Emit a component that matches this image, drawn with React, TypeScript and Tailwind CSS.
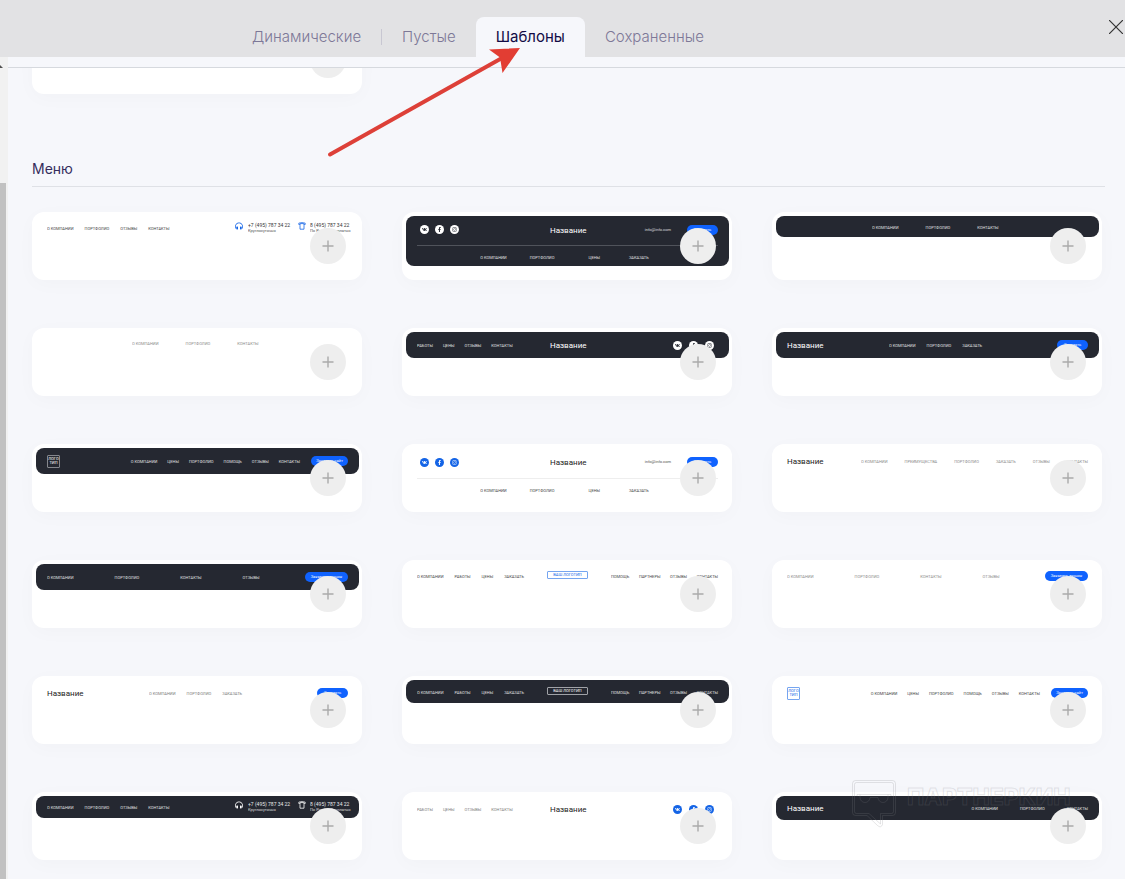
import type { ReactNode } from "react";
import clsx from "clsx";
import { FaFacebookF, FaHeadphonesAlt, FaInstagram, FaVk } from "react-icons/fa";

const tabs = ["Динамические", "Пустые", "Шаблоны", "Сохраненные"];

function PlusButton() {
  return (
    <button
      type="button"
      aria-label="Добавить"
      className="absolute right-4 bottom-4 flex size-9 items-center justify-center rounded-full bg-[#eeeeee]"
    >
      <svg width="12" height="12" viewBox="0 0 12 12" stroke="#aaaaaa" strokeWidth="1.4">
        <path d="M6 .5v11M.5 6h11" />
      </svg>
    </button>
  );
}

function Card({ children }: { children?: ReactNode }) {
  return (
    <div className="relative h-[68px] rounded-xl bg-white pt-1 pr-[3px] pl-1 shadow-[0_4px_20px_rgba(30,30,60,0.025)]">
      {children}
      <PlusButton />
    </div>
  );
}

// Site header strip inside a card
function Bar({ dark, className, children }: { dark?: boolean; className: string; children: ReactNode }) {
  return (
    <div
      className={clsx(
        "flex items-center rounded-lg px-[11px]",
        dark ? "bg-[#252831] text-white" : "text-[#222222]",
        className
      )}
    >
      {children}
    </div>
  );
}

function Nav({ items, className }: { items: string[]; className?: string }) {
  return (
    <div className={clsx("flex pt-[2px] text-[4px] leading-[6px] whitespace-nowrap uppercase opacity-85", className)}>
      {items.map((item) => (
        <span key={item}>{item}</span>
      ))}
    </div>
  );
}

function Title({ className }: { className?: string }) {
  return <span className={clsx("pt-[2px] text-[8px] leading-[10px]", className)}>Название</span>;
}

function Pill({ children, className }: { children: string; className: string }) {
  return (
    <span
      className={clsx(
        "h-[10px] shrink-0 rounded-full bg-[#0f62fe] text-center text-[4px] leading-[10px] whitespace-nowrap text-white",
        className
      )}
    >
      {children}
    </span>
  );
}

function Socials({ dark, className }: { dark?: boolean; className?: string }) {
  return (
    <div className={clsx("flex", className)}>
      {[FaVk, FaFacebookF, FaInstagram].map((Icon, i) => (
        <span
          key={i}
          className={clsx(
            "flex size-[9px] items-center justify-center rounded-full",
            dark ? "bg-white text-[#252831]" : "bg-[#1464e6] text-white"
          )}
        >
          <Icon size={5} />
        </span>
      ))}
    </div>
  );
}

function Phones({ dark }: { dark?: boolean }) {
  const color = dark ? "text-white" : "text-[#1464e6]";
  return (
    <div className="ml-auto flex text-[5px] leading-[6px] whitespace-nowrap">
      <FaHeadphonesAlt size={8} className={clsx("mr-[5px]", color)} />
      <div className="w-[41px]">
        <div className="opacity-90">+7 (495) 787 34 22</div>
        <div className="text-[4px] opacity-80">Круглосуточно</div>
      </div>
      <svg width="8" height="8" viewBox="0 0 8 8" fill="none" stroke="currentColor" strokeWidth=".8" className={clsx("mr-1 ml-[9px]", color)}>
        <path d="M.8 2.5V1.2C2.8.5 5.2.5 7.2 1.2v1.3L5.8 2.7V1.6H2.2v1.1zM2 3.2v4h4v-4" />
      </svg>
      <div className="w-[38px]">
        <div className="opacity-90">8 (495) 787 34 22</div>
        <div className="text-[4px] opacity-80">По России бесплатно</div>
      </div>
    </div>
  );
}

function SquareLogo({ className }: { className: string }) {
  return (
    <span className={clsx("flex size-[13px] flex-col items-center justify-center rounded-[1px] border text-[4px] leading-[4px]", className)}>
      <span>ЛОГО</span>
      <span>ТИП</span>
    </span>
  );
}

function PhoneMenu({ dark }: { dark?: boolean }) {
  return (
    <Card>
      <Bar dark={dark} className={dark ? "h-[22px]" : "h-6"}>
        <Nav items={["О компании", "Портфолио", "Отзывы", "Контакты"]} className="gap-[11px]" />
        <Phones dark={dark} />
      </Bar>
    </Card>
  );
}

function TwoRowMenu({ dark }: { dark?: boolean }) {
  return (
    <Card>
      <div
        className={clsx(
          "rounded-lg px-[11px]",
          dark ? "h-[50px] bg-[#252831] text-white" : "h-[52px] text-[#222222]"
        )}
      >
        <div className={clsx("flex items-center border-b pb-[2px]", dark ? "h-[30px] border-[#50535b]" : "h-[31px] border-[#eeeeee]")}>
          <Socials dark={dark} className="ml-[3px] gap-[6px]" />
          <Title className="ml-[91px]" />
          <div className="ml-auto flex items-center gap-4">
            <span className="text-[4px] leading-[6px] opacity-80">info@info.com</span>
            <Pill className="w-[31px]">Заказать</Pill>
          </div>
        </div>
        <div className="flex h-[22px] items-center justify-center pr-[6px]">
          <Nav items={["О компании", "Портфолио"]} className="gap-[23px]" />
          <Nav items={["Цены", "Заказать"]} className="ml-[34px] gap-[29px]" />
        </div>
      </div>
    </Card>
  );
}

function CenteredMenu({ dark }: { dark?: boolean }) {
  return (
    <Card>
      <Bar dark={dark} className={dark ? "h-[21px]" : "h-[22px]"}>
        <Nav
          items={["О компании", "Портфолио", "Контакты"]}
          className={clsx("ml-[85px] gap-[27px]", !dark && "text-[#777777]")}
        />
      </Bar>
    </Card>
  );
}

function SocialMenu({ dark }: { dark?: boolean }) {
  return (
    <Card>
      <Bar dark={dark} className="h-[26px]">
        <div className="w-[133px]">
          <Nav
            items={["Работы", "Цены", "Отзывы", "Контакты"]}
            className={clsx("gap-[10px]", !dark && "text-[#666666]")}
          />
        </div>
        <Title />
        <Socials dark={dark} className="mr-1 ml-auto gap-[7px]" />
      </Bar>
    </Card>
  );
}

function OrderMenu({ dark }: { dark?: boolean }) {
  return (
    <Card>
      <Bar dark={dark} className="h-[26px]">
        <Title className="w-[102px]" />
        <Nav
          items={["О компании", "Портфолио", "Заказать"]}
          className={clsx("gap-[11px]", !dark && "text-[#666666]")}
        />
        <Pill className="ml-auto w-[31px]">Заказать</Pill>
      </Bar>
    </Card>
  );
}

function LogoMenu({ dark }: { dark?: boolean }) {
  return (
    <Card>
      <Bar dark={dark} className="h-[26px]">
        <SquareLogo className={dark ? "border-[#85878d]" : "border-[#75a5f0] text-[#1464e6]"} />
        <Nav
          items={["О компании", "Цены", "Портфолио", "Помощь", "Отзывы", "Контакты"]}
          className="ml-auto gap-[10px]"
        />
        <Pill className="ml-[11px] w-[37px]">Заказать сайт</Pill>
      </Bar>
    </Card>
  );
}

function CallMenu({ dark }: { dark?: boolean }) {
  return (
    <Card>
      <Bar dark={dark} className={dark ? "h-[26px]" : "h-6"}>
        <Nav
          items={["О компании", "Портфолио", "Контакты", "Отзывы"]}
          className={clsx("gap-[41px]", !dark && "text-[#777777]")}
        />
        <Pill className="ml-auto w-[43px]">Заказать звонок</Pill>
      </Bar>
    </Card>
  );
}

function SplitMenu({ dark }: { dark?: boolean }) {
  return (
    <Card>
      <Bar dark={dark} className={clsx("justify-between", dark ? "h-[23px]" : "h-6")}>
        <Nav items={["О компании", "Работы", "Цены", "Заказать"]} className="w-[107px] justify-between" />
        <span
          className={clsx(
            "mb-[2px] h-2 w-[41px] rounded-[1px] border text-center text-[4px] leading-[6px] whitespace-nowrap",
            dark ? "border-[#a0a2a7]" : "border-[#75a5f0] text-[#1464e6]"
          )}
        >
          ВАШ ЛОГОТИП
        </span>
        <Nav items={["Помощь", "Партнеры", "Отзывы", "Контакты"]} className="w-[107px] justify-between" />
      </Bar>
    </Card>
  );
}

function Watermark() {
  return (
    <div className="pointer-events-none absolute -top-3 left-20 flex items-start gap-[11px]">
      <svg width="44" height="48" viewBox="0 0 44 48" fill="none" stroke="#808085" strokeOpacity=".2">
        <path d="M3.500.500h37a3 3 0 0 1 3 3v29a3 3 0 0 1-3 3H30.500V44.500q-1.500 4-5 1L15 35.500H3.500a3 3 0 0 1-3-3v-29a3 3 0 0 1 3-3z" />
        <path d="M4.500 2.500h35a2 2 0 0 1 2 2v27a2 2 0 0 1-2 2H28.500V44L17 33.500H4.500a2 2 0 0 1-2-2v-27a2 2 0 0 1 2-2z" />
        <path d="M5 16V14.500h34V16M8 14.500v3a5 5 0 0 0 10 0M26 17.500a5 5 0 0 0 10 0v-3M18 17.500h8" />
      </svg>
      <span className="mt-[5px] font-['Inter','Noto_Sans',sans-serif] text-[23px] leading-6 font-extrabold text-transparent [-webkit-text-stroke:1px_rgba(128,128,133,0.2)]">
        ПАРТНЕРКИН
      </span>
    </div>
  );
}

export default function App() {
  return (
    <div className="flex h-screen flex-col overflow-hidden bg-[#f6f7fb] font-['Inter','Noto_Sans',sans-serif]">
      <header className="relative flex h-[57px] shrink-0 items-end bg-[#e2e2e4] pl-[232px]">
        <div role="tablist" className="flex h-10 items-center">
          {tabs.map((tab, i) => (
            <div key={tab} className="flex h-full items-center">
              <button
                type="button"
                role="tab"
                aria-selected={tab === "Шаблоны"}
                className={clsx(
                  "h-full rounded-t-lg px-5 text-[15px]",
                  tab === "Шаблоны" ? "bg-[#f6f7fb] text-[#120b45]" : "font-light text-[#7d7897]"
                )}
              >
                {tab}
              </button>
              {i === 0 && <span className="h-4 w-px bg-[#c8c7d2]" />}
            </div>
          ))}
        </div>
        <button type="button" aria-label="Закрыть" className="absolute top-5 right-[2px]">
          <svg width="14" height="14" viewBox="0 0 14 14" stroke="#333333" strokeWidth="1.2">
            <path d="M0 0l14 14M14 0L0 14" />
          </svg>
        </button>
        <svg
          className="pointer-events-none absolute top-11 left-[326px] z-10"
          width="200"
          height="116"
          viewBox="0 0 200 116"
          fill="#e23d33"
        >
          <path d="M4 110.500L176 14" stroke="#dd4038" strokeWidth="4" strokeLinecap="round" />
          <path d="M194 4L163 5.500l11 8 2.500 15.500z" />
        </svg>
      </header>

      <div className="flex min-h-0 flex-1">
        <div className="flex w-2 shrink-0 flex-col bg-[#f1f1f1]">
          <svg width="3" height="3" viewBox="0 0 3 3" fill="#505050" className="mt-2">
            <path d="M0 0l3 3H0z" />
          </svg>
          <div className="mt-[115px] w-[6px] flex-1 bg-[#c1c1c1]" />
        </div>

        <main className="mt-[10px] min-w-0 flex-1 overflow-hidden border-t border-[#d6d9de] pr-5 pl-6">
          <div className="-mt-[42px] grid grid-cols-[repeat(auto-fill,330px)] gap-x-10">
            <Card />
          </div>

          <h2 className="mt-16 border-b border-[#dfe1e6] pb-[6px] text-[14px] leading-[22px] text-[#342c5c]">Меню</h2>

          <div className="mt-[25px] grid grid-cols-[repeat(auto-fill,330px)] gap-x-10 gap-y-12 font-['Roboto','Noto_Sans',sans-serif]">
            <PhoneMenu />
            <TwoRowMenu dark />
            <CenteredMenu dark />

            <CenteredMenu />
            <SocialMenu dark />
            <OrderMenu dark />

            <LogoMenu dark />
            <TwoRowMenu />
            <Card>
              <Bar className="h-[25px]">
                <Title className="w-[74px]" />
                <Nav
                  items={["О компании", "Преимущества", "Портфолио", "Заказать", "Отзывы", "Контакты"]}
                  className="flex-1 justify-between text-[#777777]"
                />
              </Bar>
            </Card>

            <CallMenu dark />
            <SplitMenu />
            <CallMenu />

            <OrderMenu />
            <SplitMenu dark />
            <LogoMenu />

            <PhoneMenu dark />
            <SocialMenu />
            <div className="relative">
              <Card>
                <Bar dark className="h-6 justify-between">
                  <Title />
                  <Nav items={["О компании", "Портфолио", "Контакты"]} className="gap-[22px]" />
                </Bar>
              </Card>
              <Watermark />
            </div>
          </div>
        </main>
      </div>
    </div>
  );
}
